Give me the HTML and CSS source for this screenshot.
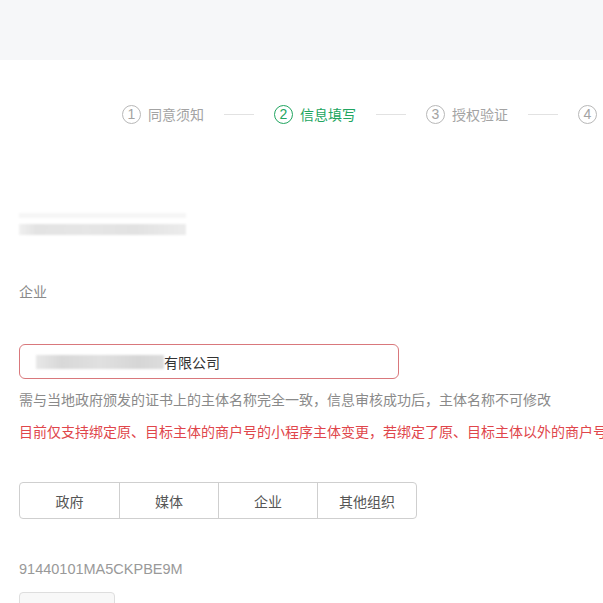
FILE: index.html
```html
<!DOCTYPE html>
<html lang="zh">
<head>
<meta charset="utf-8">
<title>信息填写</title>
<link rel="stylesheet" href="styles.css">
</head>
<body>
<div class="topbar"></div>
<div class="steps">
  <div class="step"><span class="num">1</span><span class="label">同意须知</span></div>
  <span class="line"></span>
  <div class="step active"><span class="num">2</span><span class="label">信息填写</span></div>
  <span class="line"></span>
  <div class="step"><span class="num">3</span><span class="label">授权验证</span></div>
  <span class="line"></span>
  <div class="step"><span class="num">4</span></div>
</div>
<div class="content">
  <div class="blurred">
    <div class="blur-top"></div>
    <div class="blur-bottom"></div>
  </div>
  <div class="type-text">企业</div>
  <div class="input">
    <span class="blur-name"></span><span class="name">有限公司</span>
  </div>
  <div class="hint">需与当地政府颁发的证书上的主体名称完全一致，信息审核成功后，主体名称不可修改</div>
  <div class="warn">目前仅支持绑定原、目标主体的商户号的小程序主体变更，若绑定了原、目标主体以外的商户号</div>
  <div class="segments">
    <div class="seg">政府</div>
    <div class="seg">媒体</div>
    <div class="seg">企业</div>
    <div class="seg">其他组织</div>
  </div>
  <div class="code">91440101MA5CKPBE9M</div>
  <div class="graybox"></div>
</div>
</body>
</html>
```
FILE: styles.css
```css
html, body {
  margin: 0;
  padding: 0;
  overflow: hidden;
  width: 603px;
  height: 603px;
  background: #fff;
  font-family: "Microsoft YaHei", "Noto Sans CJK SC", "Liberation Sans", sans-serif;
  font-size: 14px;
  color: #333;
}
.topbar {
  height: 60px;
  background: #f6f7f9;
}
.steps {
  display: flex;
  align-items: center;
  height: 20px;
  margin-top: 44px;
  padding-left: 122px;
  white-space: nowrap;
}
.step {
  display: flex;
  align-items: center;
  flex: none;
  color: #a3a3a3;
}
.num {
  box-sizing: border-box;
  width: 19px;
  height: 19px;
  border: 1px solid #b8b8b8;
  border-radius: 50%;
  display: flex;
  align-items: center;
  justify-content: center;
  font-family: "Liberation Sans", sans-serif;
  font-size: 14px;
  line-height: 1;
  margin-right: 7px;
}
.label {
  font-size: 14px;
  line-height: 20px;
}
.step.active {
  color: #21a560;
}
.step.active .num {
  border-color: #21a560;
}
.line {
  flex: none;
  width: 30px;
  height: 1px;
  background: #e2e2e2;
  margin: 0 20px;
}
.content {
  padding-left: 19px;
}
.blurred {
  margin-top: 89px;
  width: 167px;
  height: 22px;
  display: flex;
  flex-direction: column;
  justify-content: space-between;
}
.blur-top {
  height: 5px;
  background: #f6f6f6;
  filter: blur(1px);
}
.blur-bottom {
  height: 11px;
  background: linear-gradient(90deg, #f0f0f0 0%, #e3e3e3 10%, #e6e6e6 40%, #e2e2e2 70%, #ececec 100%);
  filter: blur(0.8px);
}
.type-text {
  margin-top: 46px;
  line-height: 20px;
  color: #8a8a8a;
}
.input {
  box-sizing: border-box;
  margin-top: 43px;
  width: 380px;
  height: 35px;
  border: 1px solid #d9787c;
  border-radius: 6px;
  display: flex;
  align-items: center;
  padding-left: 16px;
}
.blur-name {
  display: inline-block;
  width: 128px;
  height: 14px;
  background: linear-gradient(90deg, #e8e8e8 0%, #d8d8d8 20%, #e0e0e0 50%, #d6d6d6 80%, #dcdcdc 100%);
  filter: blur(1px);
}
.name {
  color: #333;
  line-height: 20px;
}
.hint {
  margin-top: 10px;
  line-height: 20px;
  color: #8a8a8a;
  white-space: nowrap;
}
.warn {
  margin-top: 12px;
  line-height: 20px;
  color: #e0464b;
  white-space: nowrap;
}
.segments {
  box-sizing: border-box;
  margin-top: 41px;
  width: 398px;
  height: 37px;
  border: 1px solid #cfcfcf;
  border-radius: 4px;
  display: grid;
  grid-template-columns: repeat(4, 1fr);
}
.seg {
  display: flex;
  align-items: center;
  justify-content: center;
  color: #555;
  border-left: 1px solid #cfcfcf;
}
.seg:first-child {
  border-left: none;
}
.code {
  margin-top: 40px;
  line-height: 20px;
  font-family: "Microsoft YaHei", "Liberation Sans", sans-serif;
  font-size: 14.5px;
  color: #999;
}
.graybox {
  box-sizing: border-box;
  margin-top: 13px;
  width: 96px;
  height: 30px;
  border: 1px solid #dedede;
  border-radius: 4px;
  background: #f8f8f8;
}
```
